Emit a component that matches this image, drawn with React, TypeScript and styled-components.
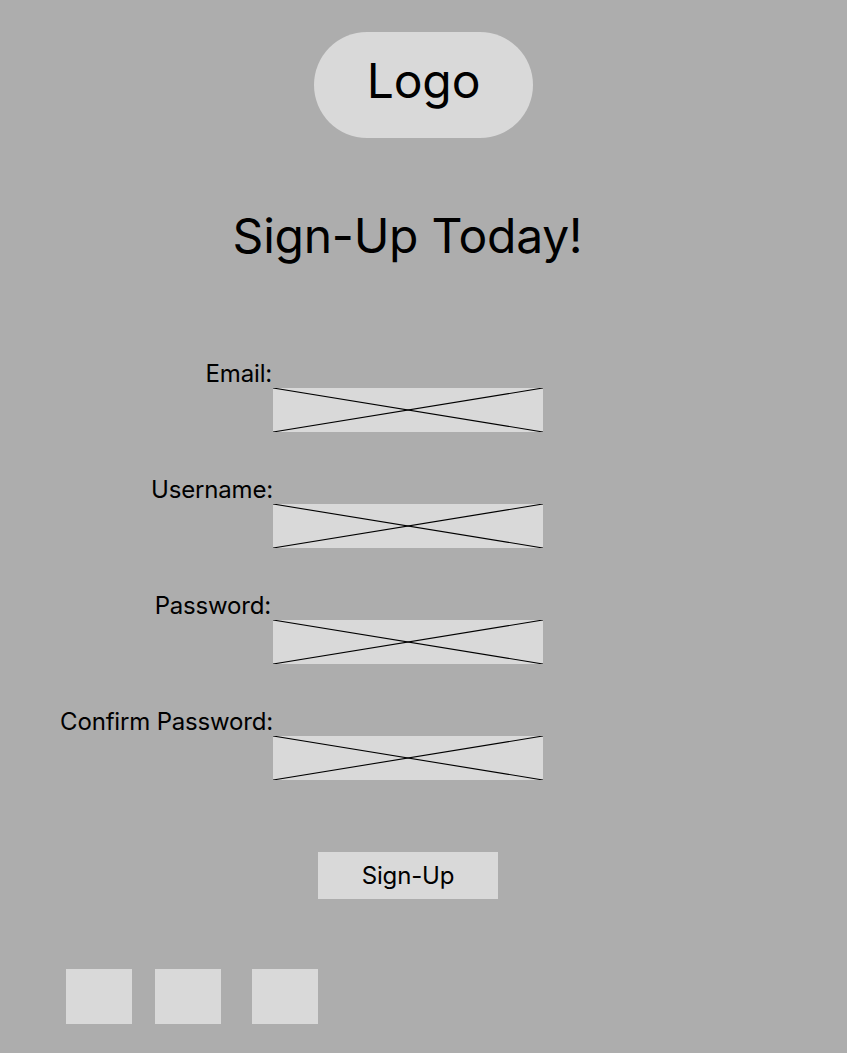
import React from "react";
import styled, { createGlobalStyle } from "styled-components";

const GlobalStyle = createGlobalStyle`
  html, body {
    margin: 0;
    padding: 0;
    background: #adadad;
  }
  body {
    font-family: Inter, "Noto Sans", sans-serif;
    color: #000;
  }
  * { box-sizing: border-box; }
`;

const Page = styled.div`
  width: 847px;
  min-height: 1053px;
  background: #adadad;
  padding-top: 32px;
  display: flex;
  flex-direction: column;
`;

const LogoPill = styled.div`
  align-self: center;
  width: 219px;
  height: 106px;
  border-radius: 53px;
  background: #d9d9d9;
  display: flex;
  align-items: center;
  justify-content: center;
  font-size: 48px;
  line-height: 58px;
  letter-spacing: -0.15px;
  padding-bottom: 9px;
`;

const Content = styled.div`
  width: 815px;
  display: flex;
  flex-direction: column;
  align-items: center;
`;

const Title = styled.h1`
  margin: 69px 0 0;
  font-weight: 400;
  font-size: 48px;
  line-height: 58px;
  letter-spacing: -0.25px;
`;

const Form = styled.form`
  align-self: flex-start;
  margin-top: 94px;
  display: flex;
  flex-direction: column;
  gap: 43px;
`;

const Field = styled.div`
  display: grid;
  grid-template-columns: 273px 270px;
  grid-template-rows: 29px 44px;
`;

const Label = styled.label<{ $shift?: number }>`
  grid-column: 1;
  grid-row: 1;
  text-align: right;
  font-size: 24px;
  line-height: 29px;
  letter-spacing: -0.18px;
  white-space: nowrap;
  padding-right: ${(p) => p.$shift ?? 0}px;
`;

const InputBox = styled.div`
  grid-column: 2;
  grid-row: 2;
  background: #d9d9d9;
  position: relative;
  svg {
    position: absolute;
    inset: 0;
    width: 100%;
    height: 100%;
  }
`;

const Button = styled.button`
  margin-top: 72px;
  margin-left: 1px;
  width: 180px;
  height: 47px;
  border: none;
  background: #d9d9d9;
  font-family: Inter, "Noto Sans", sans-serif;
  font-size: 24px;
  line-height: 29px;
  letter-spacing: -0.15px;
  color: #000;
  padding: 0;
`;

const Squares = styled.div`
  margin-top: 70px;
  padding-left: 66px;
  display: flex;
`;

const Square = styled.div<{ $gap: number }>`
  width: 66px;
  height: 55px;
  background: #d9d9d9;
  margin-left: ${(p) => p.$gap}px;
`;

const Cross = () => (
  <svg viewBox="0 0 270 44" preserveAspectRatio="none">
    <line x1="0" y1="0" x2="270" y2="44" stroke="#000" strokeWidth="1.1" />
    <line x1="0" y1="44" x2="270" y2="0" stroke="#000" strokeWidth="1.1" />
  </svg>
);

const fields = [
  { label: "Email:", shift: 1 },
  { label: "Username:", shift: 0 },
  { label: "Password:", shift: 2 },
  { label: "Confirm Password:", shift: 0 },
];

export default function App() {
  return (
    <>
      <GlobalStyle />
      <Page>
        <LogoPill>Logo</LogoPill>
        <Content>
          <Title>Sign-Up Today!</Title>
          <Form onSubmit={(e) => e.preventDefault()}>
            {fields.map((f) => (
              <Field key={f.label}>
                <Label $shift={f.shift}>{f.label}</Label>
                <InputBox>
                  <Cross />
                </InputBox>
              </Field>
            ))}
          </Form>
          <Button type="button">Sign-Up</Button>
        </Content>
        <Squares>
          <Square $gap={0} />
          <Square $gap={23} />
          <Square $gap={31} />
        </Squares>
      </Page>
    </>
  );
}
